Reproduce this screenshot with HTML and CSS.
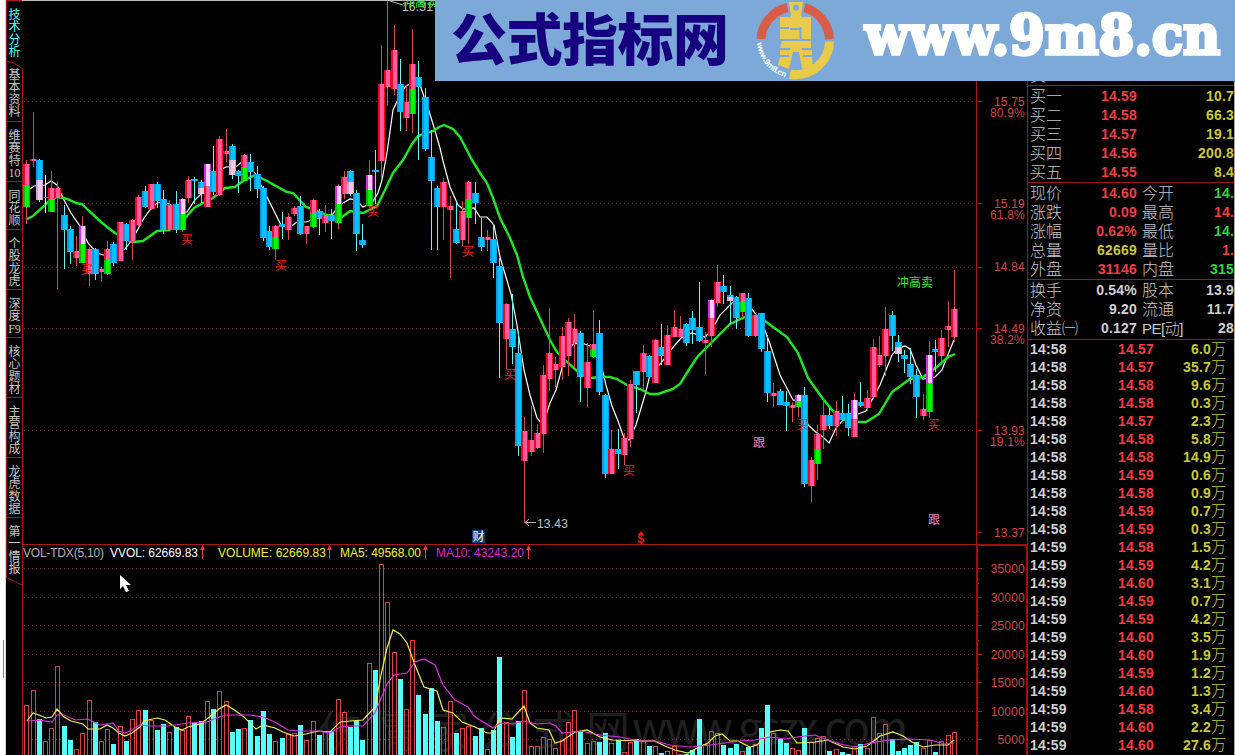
FILE: index.html
```
<!DOCTYPE html>
<html lang="zh-CN">
<head>
  <meta charset="UTF-8">
  <title>公式指标网</title>
  <link rel="stylesheet" href="styles.css">
</head>
<body>

<div class="app">
  <div class="edge"><div class="edge-thumb"></div></div>

  <nav class="tabs">
    <div class="tab h61 active">技术分析</div>
    <div class="tab h61 slant"><svg viewBox="0 0 16 8"><path d="M0 0.500L6 1.500L16 8" stroke="#a81818" fill="none"/></svg>基本资料</div>
    <div class="tab h60">维赛特10</div>
    <div class="tab h48">同花顺</div>
    <div class="tab h60">个股龙虎</div>
    <div class="tab h48">深度F9</div>
    <div class="tab h60">核心题材</div>
    <div class="tab h60">主营构成</div>
    <div class="tab h60">龙虎数据</div>
    <div class="tab h60 last">第一情报</div>
    <svg class="tab-end" viewBox="0 0 17 12"><path d="M1 0L16 7" stroke="#a81818" fill="none"/></svg>
  </nav>

  <svg class="chart" id="chart" viewBox="22 0 1006 755"></svg>

  <aside class="quote">
    <div class="hidden-top"><span>卖一</span></div>
    <div class="block bids" id="bids"></div>
    <div class="block info" id="info"></div>
    <div class="block info fin" id="fin"></div>
    <div class="block ticks" id="ticks"></div>
  </aside>
</div>

<!-- banner -->
<div class="banner">
  <svg viewBox="435 0 800 81">
    <text class="brand" x="451" y="60" textLength="278">公式指标网</text>
    <g fill="none" stroke-width="9">
      <path d="M761 39A34.5 34.5 0 0 1 787.5 7.5" stroke="#d85c48"/>
      <path d="M804.500 7.500A34.500 34.500 0 0 1 829.500 39" stroke="#d85c48"/>
      <path d="M829.500 41.500A34 34 0 0 1 790 74.200" stroke="#e9ca4a"/>
    </g>
    <path fill="#e9ca4a" d="M789 2h14l-2 15h10v22h-31V29h9v-2h-9V17h11zM782 41h29v7h-9v2h10v5h-9v2h9l1 10-11 2-3-17h-6l-4 17-11-4 2-8h9v-2h-9v-5h10v-2h-10z"/>
    <circle cx="796" cy="7.500" r="3" fill="#7ca9d8"/>
    <path d="M790 29h10M800.500 27v12" stroke="#7ca9d8" stroke-width="2"/>
    <path id="ring" d="M757 43A39 39 0 0 0 790 78" fill="none"/>
    <text class="ring-text"><textPath href="#ring" textLength="47">www.9m8.cn</textPath></text>
    <text class="site" x="865" y="54" textLength="355" lengthAdjust="spacingAndGlyphs">www.9m8.cn</text>
  </svg>
</div>

<script>
// top wick, body top, body bottom, bottom wick, type, colour change
// r red, b blue, rg red/green, mg violet/green, mr violet/red, bl blue/pale
const candles = `160 164 207 224 rg 185|112 159 161 167 r|159 160 200 202 bl 180|175 197 198 213 w|171 188 212 212 rg 199|181 188 198 289 r|205 215 230 269 b|226 229 252 264 b|236 251 258 266 r|216 226 263 263 mg 244
247 249 274 286 r|248 249 274 280 b|267 269 272 282 r|241 249 274 275 rg 260|242 244 263 266 b|222 222 261 261 r|223 224 241 250 b|219 220 241 260 r|195 197 225 226 r|186 191 207 208 b
184 184 209 209 r|182 184 201 208 b|190 199 230 234 b|200 205 230 230 r|191 204 230 233 b|198 199 230 232 mg 214|176 180 198 203 r|177 179 181 204 b|180 182 194 203 bl 188|164 164 207 207 mr 186
146 171 192 195 b|136 139 195 196 r|129 151 154 162 r|144 146 175 179 bl 160|170 171 176 193 b|154 155 181 181 rg 167|154 162 172 191 b|166 174 189 198 b|186 188 238 241 b|226 231 247 250 b
225 226 249 260 rg 237|212 224 227 239 b|213 217 230 240 r|206 208 214 216 r|196 206 234 235 b|226 226 234 244 r|199 200 227 228 rg 213|209 211 218 235 b|205 215 223 232 r|209 215 221 239 b
184 186 223 229 mg 204|171 177 194 199 r|170 171 194 196 bl 182|190 193 234 251 b|224 240 245 248 b|160 175 206 208 mg 190|150 170 172 204 b|45 84 161 178 r|0 70 87 106 r|25 50 89 95 r
59 84 112 131 b|85 102 118 131 r|29 64 114 133 rg 89|61 77 87 160 b|88 97 149 151 b|130 157 181 250 b|186 188 207 250 b|178 182 207 240 r|196 206 210 278 r|203 229 243 244 b
201 211 240 246 r|181 182 218 244 rg 199|182 193 203 224 b|218 237 247 251 b|230 237 240 251 r|224 239 263 278 b|258 266 323 378 b|303 304 339 369 r|294 329 347 364 b|332 353 446 456 b
417 431 461 523 r|406 440 452 456 r|424 433 448 449 r|365 375 434 453 r|308 353 379 391 r|357 364 370 387 r|327 336 367 380 r|318 322 356 376 r|314 329 343 367 r|331 333 377 402 b
343 362 388 407 r|310 344 357 358 rg 350|320 333 392 395 b|394 395 474 478 b|430 449 474 474 r|429 449 454 469 b|433 438 455 465 r|380 384 439 447 r|371 371 385 413 b|345 353 372 390 r
355 356 377 379 b|339 340 383 383 r|324 347 356 365 b|325 335 365 365 r|310 327 337 337 r|316 329 337 337 r|323 324 343 346 b|311 318 330 344 b|282 327 341 342 b|332 340 343 375 r
299 300 336 347 mr 318|265 282 303 307 r|275 286 292 304 b|286 295 301 324 bl 297|296 297 318 329 b|293 293 312 318 rg 302|293 298 336 337 b|314 315 336 337 r|313 313 349 352 b|335 351 393 402 b
383 393 396 407 r|389 391 405 405 b|391 402 406 431 b|402 405 408 422 r|394 395 407 417 mg 401|387 395 484 487 b|457 460 486 502 r|425 434 464 480 rg 449|399 415 430 449 r|408 415 426 429 b
401 411 426 436 r|396 413 420 421 b|404 413 428 436 b|393 400 437 437 mr 419|382 402 406 407 b|390 398 408 411 r|339 347 397 398 r|336 355 365 367 r|307 329 356 376 r|311 315 336 351 b
335 342 354 362 bl 347|350 355 359 373 b|348 364 377 384 b|369 375 397 418 b|394 409 416 420 r|341 355 412 418 mg 383|340 349 352 372 b|330 338 356 365 r|301 326 330 347 r|270 309 337 342 r`
  .split(/[\n|]/).map(s => s.split(' '));

const volumes = `705r 690r 719c 741r 728r 666r 726c 740c 749r 733r 700r 722c 741r 729r 744c 726r 741c 719r 710r 710c
720r 730c 724c 732r 727c 730r 716r 723c 721c 701r 709c 691r 701r 732c 729c 728r 720c 736c 711c 734c
741r 738c 734r 733r 725c 740r 721r 735c 731r 731c 699r 712r 727c 721c 740c 663r 670c 564r 602r 652r
679c 709r 640r 695c 714c 688c 721c 727r 701r 733c 728r 726r 736c 728c 749r 730c 657c 722r 737c 721c
690r 746r 746r 737r 739r 748r 740r 722r 710r 732c 743r 741r 742c 733c 743r 740c 752r 742r 739c 741r
746c 746r 753c 751r 746r 754r 754c 750c 719c 744r 731r 733r 745c 748c 744c 751r 747c 744r 728c 705c
733r 739c 743c 748r 750r 728c 742r 738r 736r 751c 749r 752c 754c 746r 744c 748r 717r 733r 724r 739c
751c 748c 745c 742c 748r 740r 752c 741r 735r 732r`.split(/\s+/);

const green = '27,219 33,216 44,206 50,200 57,197 64,198 70,200 76,203 82,204 88,210 101,222 107,227 115,233 125,239 133,242 143,241 150,236 157,231 169,230 181,222 187,216 194,208 203,203 213,198 225,188 235,187 243,181 255,175 267,181 287,192 293,193 306,207 315,210 327,215 342,217 350,211 363,213 377,206 385,190 393,173 403,160 412,144 418,136 433,131 439,127 444,125 453,129 460,137 472,160 480,173 487,183 493,198 500,218 510,238 517,255 523,277 530,297 543,325 550,340 557,352 567,362 577,371 590,378 600,377 610,377 617,379 627,385 640,389 650,394 658,394 673,389 680,384 690,368 698,356 712,342 730,324 745,317 757,317 765,321 773,327 787,337 798,353 808,378 823,399 833,411 845,420 858,422 866,422 879,414 892,392 910,379 923,377 937,367 948,357 955,354';
const white = '30,189 34,186 45,185 51,181 57,185 64,200 71,213 80,226 88,243 97,253 103,255 113,255 125,249 132,240 144,218 150,210 157,203 165,202 175,207 181,213 187,212 195,200 203,192 212,178 220,170 226,167 237,166 243,161 255,173 262,187 270,203 281,225 290,227 297,222 306,222 318,218 330,218 337,208 343,203 350,199 356,200 363,207 372,203 378,193 382,180 387,153 393,110 400,95 406,86 412,83 420,85 428,108 433,124 440,148 443,161 450,187 458,205 463,209 474,208 480,217 487,217 494,225 500,257 511,294 517,325 524,370 530,395 537,418 543,425 550,403 556,390 562,368 566,355 573,344 582,343 590,346 600,360 606,385 612,406 618,421 624,438 629,440 636,425 645,395 650,375 660,364 668,354 675,345 681,338 692,333 705,337 712,330 720,315 733,302 742,303 752,309 763,325 770,344 780,375 793,400 802,401 808,425 817,433 823,437 829,443 836,428 842,421 858,414 866,411 873,398 880,385 886,370 892,355 898,348 905,346 910,349 916,365 923,379 935,377 942,370 949,352 954,340';
const ma5 = '27,721 33,713 39,715 46,718 52,717 57,709 64,717 71,721 83,724 88,729 100,729 107,725 113,728 119,733 125,736 132,733 140,727 144,721 157,718 165,720 175,727 182,730 188,727 200,724 207,719 219,709 226,705 233,709 244,717 256,729 263,725 275,728 283,732 294,736 306,734 318,731 330,732 340,722 350,721 363,720 375,707 381,675 387,648 393,630 400,634 407,643 415,665 424,687 437,691 443,710 453,713 462,722 475,727 487,733 493,733 500,718 512,719 524,706 530,723 537,728 549,730 555,743 562,741 575,732 587,730 600,737 612,740 640,741 655,741 665,746 675,750 688,753 697,748 708,743 715,736 722,734 730,741 738,741 750,747 757,745 770,732 780,730 788,731 797,743 815,742 828,740 843,747 855,749 867,746 880,736 893,732 903,736 912,742 923,747 935,745 948,745 954,740';
const ma10 = '27,721 39,720 52,722 57,715 64,715 75,720 88,719 100,725 113,723 119,731 125,733 132,730 140,725 150,726 169,726 188,723 207,722 219,717 226,715 250,715 263,717 275,722 288,730 300,731 318,731 330,733 340,727 350,726 363,726 375,713 387,684 394,675 407,673 415,662 424,659 435,665 443,685 455,700 468,707 474,716 480,720 493,728 500,723 512,724 524,721 537,724 550,723 556,726 562,733 580,731 600,735 620,737 640,741 655,741 670,745 690,747 710,745 725,743 740,741 755,740 770,737 785,739 797,737 815,735 825,739 840,744 855,747 870,743 890,740 910,739 930,740 945,744 954,743';

const xAt = i => Math.round(26.3 + i * 6.225);
const rect = (x, y, w, h, c) => `<rect x="${x}" y="${y}" width="${w}" height="${h}" fill="${c}"/>`;
const line = (pts, c, w) => `<polyline points="${pts}" fill="none" stroke="${c}" stroke-width="${w}"/>`;
const text = (x, y, cls, s) => `<text x="${x}" y="${y}" class="${cls}">${s}</text>`;

// edge and centre colour of a body
const paint = {
  r: ['#f00824', '#ff5ca0'],
  b: ['#1496f0', '#00c4ff'],
  g: ['#08b808', '#00f800'],
  m: ['#d828f0', '#ffd0ff'],
  l: ['#c8a8e0', '#f4c8dc'],
  w: ['#f02840', '#f02840']
};

function body(x, y1, y2, key) {
  const [edge, mid] = paint[key];
  const h = Math.max(y2 - y1, 1);
  return rect(x - 3, y1, 7, h, edge) + rect(x - 1, y1, 4, h, mid);
}

let out = '';

// grid
[101, 203, 267, 328, 430, 568, 597, 625, 654, 682, 711, 739].forEach(y => {
  out += `<path d="M24 ${y}.5H976" stroke="#802020" stroke-dasharray="1 3"/>`;
  out += `<path d="M976 ${y}.5h6" stroke="#a81818"/>`;
});
out += '<path d="M976 532.5h6M976 583.5h3M976 611.5h3M976 640.5h3M976 668.5h3M976 697.5h3M976 725.5h3" stroke="#a81818"/>';

out += line(white, '#fff', 1.2) + line(green, '#20e820', 2.4);

candles.forEach(([top, y1, y2, low, type, split], i) => {
  const x = xAt(i);
  const blue = type[0] === 'b';
  out += rect(x, top, 1, low - top, type === 'w' ? '#fff' : blue ? '#6ff0f0' : '#d84848');
  if (split) {
    out += body(x, +y1, +split, type[0]) + body(x, +split, +y2, type[1]);
  } else {
    out += body(x, +y1, +y2, type);
  }
});

// watermark under the volume bars
out += '<text class="water" x="318" y="748" textLength="312">伤情家公式网</text>';
out += '<text class="water" x="632" y="744" textLength="276">www.gszx.com</text>';

volumes.forEach((v, i) => {
  const x = xAt(i), y = parseInt(v);
  out += v.endsWith('c')
    ? rect(x - 2, y, 5, 760 - y, '#5ff')
    : `<rect x="${x - 1.5}" y="${y + 0.5}" width="4" height="${760 - y}" fill="none" stroke="#d84444"/>`;
});
out += line(ma5, '#f4f450', 1.2) + line(ma10, '#e030e0', 1.2);

// frames
out += '<path d="M22 544.5H1027M976.500 81V545M1027.500 81V755M22.500 69V755" stroke="#a81818" fill="none"/>';
out += '<path d="M977 755V545H1027V755" stroke="#a01010" stroke-width="2" fill="none"/>';
out += '<path d="M22 .5H435" stroke="#bbb"/>';

[[106, '15.75'], [117, '80.9%'], [208, '15.19'], [219, '61.8%'], [271, '14.84'], [333, '14.49'], [344, '38.2%'],
 [435, '13.93'], [446, '19.1%'], [537, '13.37'], [573, '35000'], [602, '30000'], [630, '25000'], [659, '20000'],
 [687, '15000'], [716, '10000'], [744, '5000']].forEach(([y, s]) => out += text(1025, y, 'axis', s));

[[87, 274], [187, 244], [281, 270], [373, 216], [468, 256], [510, 379], [629, 475], [803, 429], [934, 429]]
  .forEach(([x, y]) => out += text(x, y, 'mark', '买'));
out += text(759, 447, 'follow', '跟') + text(934, 524, 'follow', '跟');
out += text(897, 287, 'sell', '冲高卖');

out += '<path d="M387 0L403 5M525 522.500h11M529 519l-4 3.500 4 3.500" stroke="#bbb" fill="none"/>';
out += text(537, 528, 'grey', '13.43') + text(402, 11, 'grey', '16.31') + text(403, 7, 'sell', '冲高卖');
out += rect(472, 530, 13, 13, '#0c3c70') + '<text x="472.500" y="541" fill="#fff">财</text>';
out += '<text x="637.500" y="543" fill="#f01818" font-weight="bold">$</text><path d="M638 535l3-4 3 4z" fill="#f01818"/>';

// volume header
[[23, 81, 'VOL-TDX(5,10)', '#b4b4b4'], [110, 88, 'VVOL: 62669.83', '#fff', 202], [218, 108, 'VOLUME: 62669.83', '#f4f430', 329],
 [340, 81, 'MA5: 49568.00', '#f4f430', 425], [436, 88, 'MA10: 43243.20', '#d828d8', 528]].forEach(([x, w, s, c, a]) => {
  out += `<text x="${x}" y="557" fill="${c}" textLength="${w}">${s}</text>`;
  if (a) out += `<path d="M${a}.5 559v-12" stroke="#f03838"/><path d="M${a - 2} 550l2.500-5 2.500 5z" fill="#f03838"/>`;
});

// mouse pointer
out += '<path d="M120 575v14l3-3 3 6 3-1-3-6h5z" fill="#fff"/>';

document.getElementById('chart').innerHTML = out;

// quote panel
const put = (id, html) => document.getElementById(id).innerHTML = html;

put('bids', [['买一', '14.59', '10.7'], ['买二', '14.58', '66.3'], ['买三', '14.57', '19.1'], ['买四', '14.56', '200.8'], ['买五', '14.55', '8.4']]
  .map(([a, b, c]) => `<div class="row"><span>${a}</span><b class="r">${b}</b><b class="y">${c}</b></div>`).join(''));

const infoRow = ([a, b, c1, d, e, c2]) =>
  `<div class="row"><span>${a}</span><b class="${c1}">${b}</b><i></i><span>${d}</span><b class="${c2}">${e}</b></div>`;

put('info', [['现价', '14.60', 'r', '今开', '14.', 'g'], ['涨跌', '0.09', 'r', '最高', '14.', 'r'], ['涨幅', '0.62%', 'r', '最低', '14.', 'g'],
  ['总量', '62669', 'y', '量比', '1.', 'r'], ['外盘', '31146', 'r', '内盘', '315', 'g']].map(infoRow).join(''));
put('fin', [['换手', '0.54%', 'w', '股本', '13.9', 'w'], ['净资', '9.20', 'w', '流通', '11.7', 'w'],
  ['收益㈠', '0.127', 'w', '<em>PE[动]</em>', '28', 'w']].map(infoRow).join(''));

const ticks = `58 57 6.0|58 57 35.7|58 58 9.6|58 58 0.3|58 57 2.3|58 58 5.8|58 58 14.9|58 59 0.6|58 58 0.9|58 59 0.7|58 59 0.3|59 58 1.5
59 59 4.2|59 60 3.1|59 59 0.7|59 59 4.2|59 60 3.5|59 60 1.9|59 59 1.2|59 60 1.3|59 58 3.4|59 60 2.2|59 60 27.6`;
put('ticks', ticks.split(/[\n|]/).map(s => s.split(' '))
  .map(([m, p, v]) => `<div class="row"><b class="w">14:${m}</b><b class="r">14.${p}</b><b class="y">${v}<i>万</i></b></div>`).join(''));
</script>
</body>
</html>
```
FILE: styles.css
```
body {
  margin: 0;
  background: #000;
  color: #c8c8c8;
  font-family: "Liberation Sans", "Noto Sans CJK SC", sans-serif;
  overflow: hidden;
}

.app {
  display: grid;
  grid-template-columns: 6px 16px 1006px 207px;
  height: 755px;
}

.edge {
  background: #fff;
  border-right: 1px solid #f4c8c8;
  box-sizing: border-box;
  padding-top: 640px;
}

.edge-thumb {
  width: 1px;
  height: 38px;
  margin-left: 3px;
  background: #888;
}

/* left tabs */
.tabs {
  display: flex;
  flex-direction: column;
}

.tab {
  box-sizing: border-box;
  border-left: 1px solid #901818;
  border-bottom: 1px solid #a81818;
  padding: 8px 1px 0 1px;
  font-size: 12px;
  line-height: 12.3px;
  word-break: break-all;
  text-align: center;
  font-family: "Liberation Serif", "Noto Sans CJK SC", serif;
}

.h48 { height: 48px; }
.h60 { height: 60px; }
.h61 { height: 61px; }
.active { color: #5ff; border-bottom: none; border-top: 1px solid #a81818; }
.slant { padding-top: 0; }
.slant svg { display: block; width: 16px; height: 8px; margin-left: -1px; }
.last { border-bottom: none; }
.tab-end { width: 17px; height: 12px; }

/* chart */
.chart {
  width: 1006px;
  height: 755px;
  display: block;
}

.chart text { font-size: 12px; }
.chart .axis { fill: #d84444; font-size: 12px; letter-spacing: 0.2px; text-anchor: end; }
.chart .mark { fill: #f02020; text-anchor: middle; }
.chart .follow { fill: #e884cc; text-anchor: middle; }
.chart .sell { fill: #2fe82f; }
.chart .grey { fill: #c0c0c0; letter-spacing: 0.2px; }
.chart .water { fill: #aaa; fill-opacity: 0.2; font-size: 44px; font-family: "Noto Sans CJK SC", sans-serif; }

/* right quote panel */
.quote {
  box-sizing: border-box;
  border-right: 1px solid #aaa;
  overflow: hidden;
  font-size: 16px;
  font-weight: 300;
  font-family: "Liberation Sans", "Noto Sans CJK SC", sans-serif;
}

.hidden-top {
  height: 85px;
  box-sizing: border-box;
  padding: 66px 0 0 2px;
  line-height: 19px;
  overflow: hidden;
}

.block {
  border-top: 1px solid #a01818;
  box-sizing: border-box;
}

.row { display: grid; height: 19px; line-height: 19px; white-space: nowrap; }
.row span:first-child { padding-left: 2px; }
.row b { font-size: 14px; font-weight: 700; letter-spacing: 0.2px; text-align: right; }
.row em { font-style: normal; font-size: 15px; letter-spacing: -0.5px; }
.bids { height: 97px; padding-top: 1px; }
.bids .row { grid-template-columns: 60px 49px 97px; }
.info { height: 97px; padding-top: 1px; }
.info .row { grid-template-columns: 60px 49px 5px 50px 42px; }
.fin { height: 60px; }
.ticks .row { grid-template-columns: 60px 66px 72px; height: 18px; line-height: 18px; }
.ticks .row b:first-child { text-align: left; padding-left: 2px; }
.ticks i { font-style: normal; font-weight: 300; font-size: 15px; letter-spacing: 0; }

.r { color: #f23c40; }
.g { color: #22d83a; }
.y { color: #c8c83a; }
.w { color: #d0d0d0; }

/* banner over the top right corner */
.banner {
  position: absolute;
  left: 435px;
  top: 0;
  width: 800px;
  height: 81px;
  background: #7ca9d8;
}

.banner svg { display: block; width: 800px; height: 81px; overflow: visible; }

.brand {
  font-family: "Noto Sans CJK SC", sans-serif;
  font-weight: 900;
  font-size: 56px;
  fill: #160080;
}

.site {
  font-family: "DejaVu Serif", serif;
  font-weight: bold;
  font-size: 54px;
  fill: #fff;
  stroke: #fff;
  stroke-width: 3.5px;
}

.ring-text {
  font-size: 8px;
  font-weight: bold;
  fill: #fff;
}
```
